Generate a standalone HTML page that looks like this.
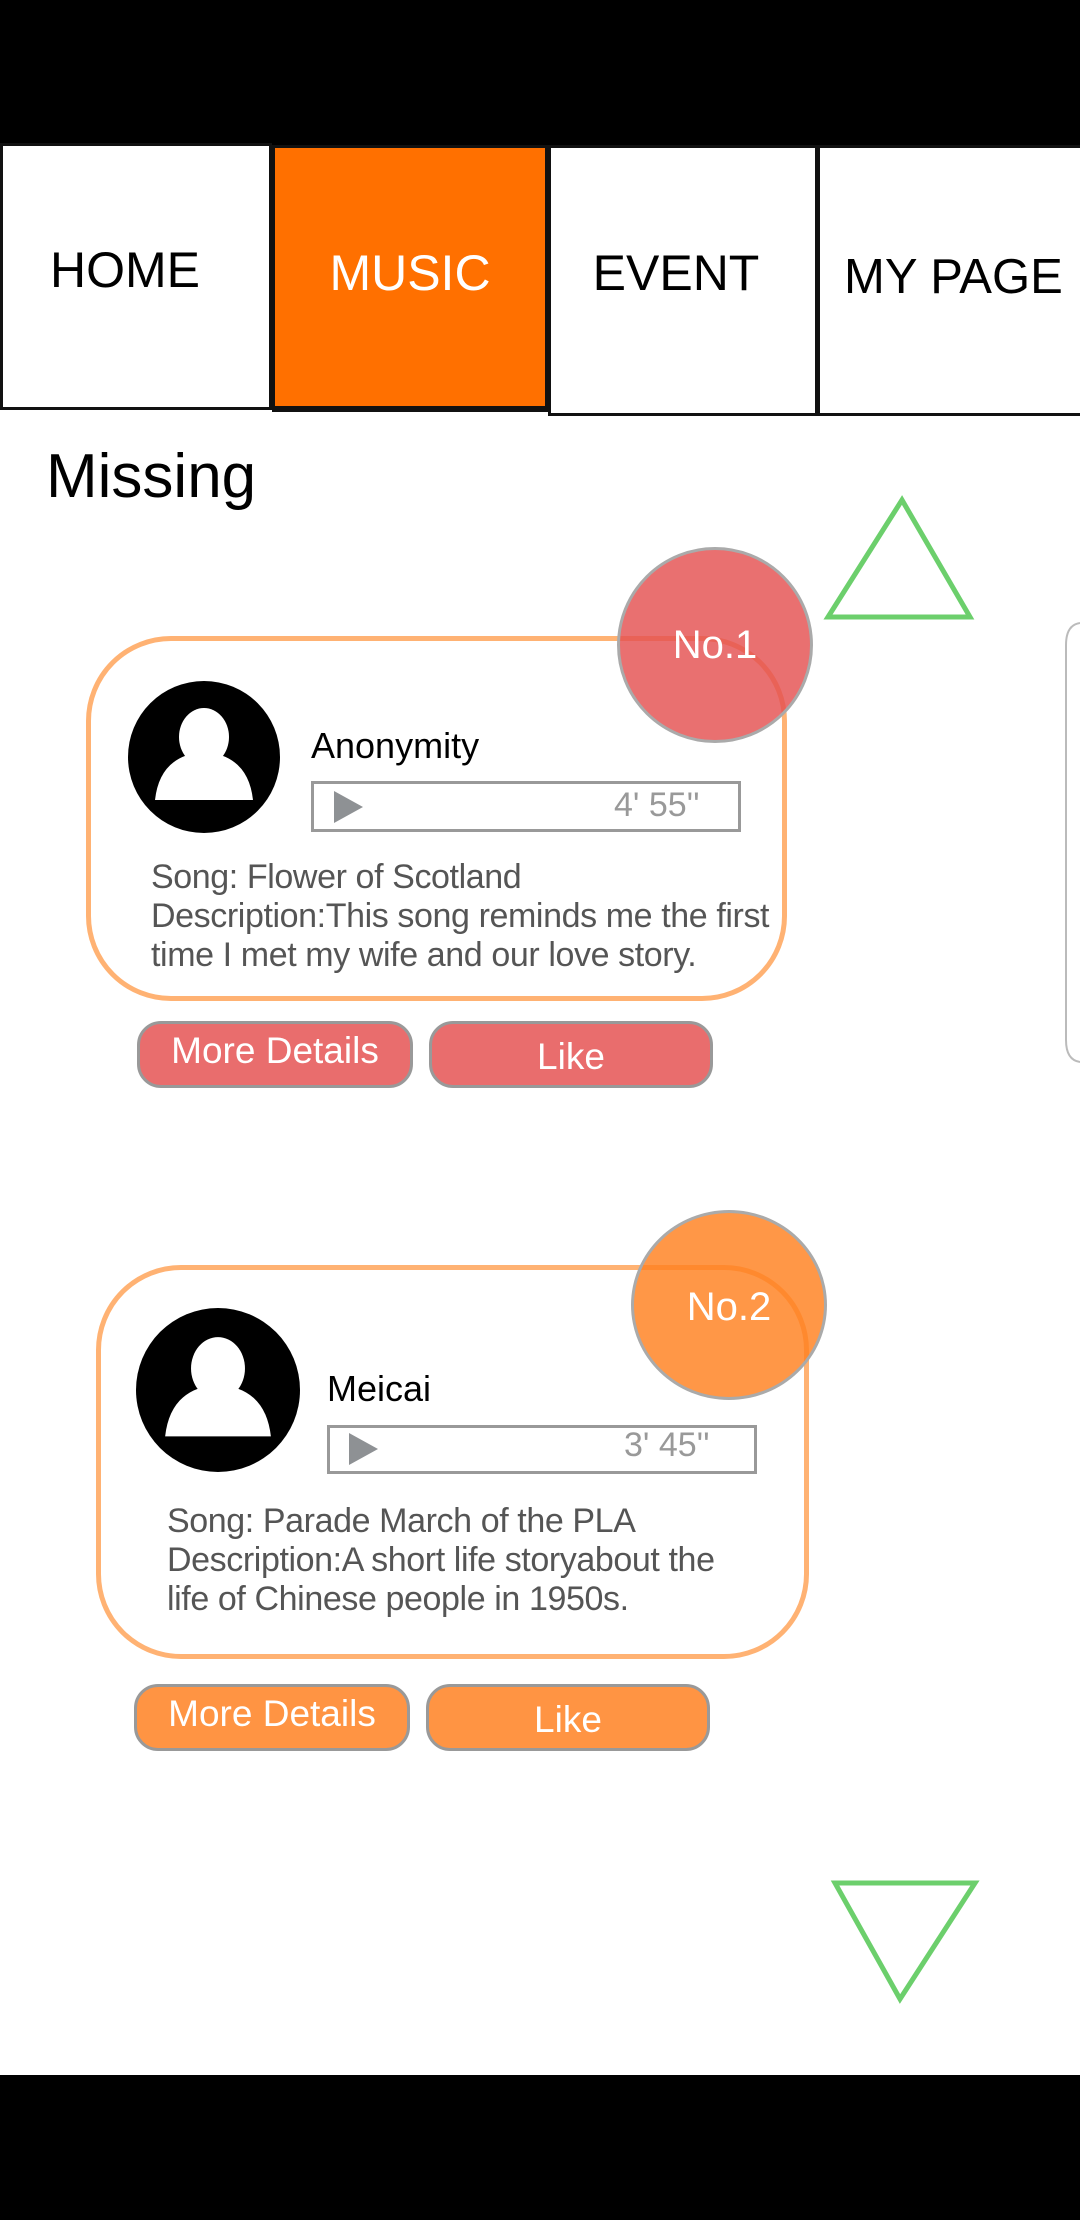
<!DOCTYPE html>
<html><head><style>
body{margin:0;width:1080px;height:2220px;position:relative;background:#fff;font-family:"Liberation Sans",sans-serif;overflow:hidden}
.a{position:absolute}
.tab{position:absolute;box-sizing:border-box;border:3px solid #111;display:flex;align-items:center;justify-content:center;font-size:50px;color:#000}
.card{position:absolute;box-sizing:border-box;border:5px solid #ffb273;border-radius:85px;background:#fff}
.txt{position:absolute;font-size:34px;color:#555;line-height:39px;white-space:nowrap;letter-spacing:-0.4px}
.player{position:absolute;box-sizing:border-box;border:3px solid #999;background:#fff}
.btn{position:absolute;box-sizing:border-box;border:3px solid #999;border-radius:24px;color:#fff;font-size:37px;display:flex;align-items:center;justify-content:center}
.circ{position:absolute;border-radius:50%;box-sizing:border-box;border:3px solid #aaa;color:#fff;font-size:40px;display:flex;align-items:center;justify-content:center}
</style></head><body>
<div class="a" style="left:0;top:0;width:1080px;height:145px;background:#000"></div>
<div class="tab" style="left:0;top:143px;width:272px;height:267px;justify-content:flex-start;padding-left:47px"><span style="margin-top:-14px">HOME</span></div>
<div class="tab" style="left:272px;top:145px;width:276px;height:267px;background:#ff7000;color:#fff;border-width:3px 3px 6px 3px"><span style="margin-top:-9px">MUSIC</span></div>
<div class="tab" style="left:548px;top:145px;width:270px;height:271px"><span style="margin-top:-15px;margin-left:-14px">EVENT</span></div>
<div class="tab" style="left:817px;top:145px;width:270px;height:271px;justify-content:flex-start;padding-left:24px;font-size:49px"><span style="margin-top:-8px">MY PAGE</span></div>
<div class="a" style="left:46px;top:441px;font-size:62px;color:#000">Missing</div>
<svg class="a" style="left:0;top:0" width="1080" height="2220">
<polygon points="902,500 828,617 970,617" fill="none" stroke="#6ccf6c" stroke-width="5"/>
<polygon points="835,1883 975,1883 900,1999" fill="none" stroke="#6ccf6c" stroke-width="5"/>
<path d="M1080,623 L1080,623 Q1066,625 1066,645 L1066,1040 Q1066,1060 1080,1062" fill="none" stroke="#bbb" stroke-width="2"/>
</svg>

<!-- card 1 -->
<div class="card" style="left:86px;top:636px;width:701px;height:365px"></div>
<svg class="a" style="left:128px;top:681px" width="152" height="152" viewBox="0 0 152 152"><circle cx="76" cy="76" r="76"/><ellipse cx="76" cy="56" rx="25" ry="29" fill="#fff"/><path d="M27,119 Q32,74 76,71 Q120,74 125,119 Z" fill="#fff"/></svg>
<div class="a" style="left:311px;top:725px;font-size:36px;color:#000">Anonymity</div>
<div class="player" style="left:311px;top:781px;width:430px;height:51px"></div>
<svg class="a" style="left:334px;top:791px" width="30" height="32"><polygon points="0,0 29,16 0,32" fill="#8e9194"/></svg>
<div class="a" style="left:614px;top:786px;font-size:34px;color:#999">4' 55''</div>
<div class="txt" style="left:151px;top:858px">Song: Flower of Scotland<br>Description:This song reminds me the first<br>time I met my wife and our love story.</div>
<div class="circ" style="left:617px;top:547px;width:196px;height:196px;background:rgba(228,80,80,0.82)"><span style="margin-top:0px">No.1</span></div>
<div class="btn" style="left:137px;top:1021px;width:276px;height:67px;background:#e96d6d"><span style="margin-top:-8px">More Details</span></div>
<div class="btn" style="left:429px;top:1021px;width:284px;height:67px;background:#e96d6d"><span style="margin-top:4px">Like</span></div>

<!-- card 2 -->
<div class="card" style="left:96px;top:1265px;width:713px;height:394px"></div>
<svg class="a" style="left:136px;top:1308px" width="164" height="164" viewBox="0 0 152 152"><circle cx="76" cy="76" r="76"/><ellipse cx="76" cy="56" rx="25" ry="29" fill="#fff"/><path d="M27,119 Q32,74 76,71 Q120,74 125,119 Z" fill="#fff"/></svg>
<div class="a" style="left:327px;top:1368px;font-size:36px;color:#000">Meicai</div>
<div class="player" style="left:327px;top:1425px;width:430px;height:49px"></div>
<svg class="a" style="left:349px;top:1433px" width="30" height="32"><polygon points="0,0 29,16 0,32" fill="#8e9194"/></svg>
<div class="a" style="left:624px;top:1426px;font-size:34px;color:#999">3' 45''</div>
<div class="txt" style="left:167px;top:1502px">Song: Parade March of the PLA<br>Description:A short life storyabout the<br>life of Chinese people in 1950s.</div>
<div class="circ" style="left:631px;top:1210px;width:196px;height:190px;background:rgba(255,128,30,0.82)"><span style="margin-top:4px">No.2</span></div>
<div class="btn" style="left:134px;top:1684px;width:276px;height:67px;background:#ff9443"><span style="margin-top:-8px">More Details</span></div>
<div class="btn" style="left:426px;top:1684px;width:284px;height:67px;background:#ff9443"><span style="margin-top:4px">Like</span></div>

<div class="a" style="left:0;top:2075px;width:1080px;height:145px;background:#000"></div>
</body></html>
